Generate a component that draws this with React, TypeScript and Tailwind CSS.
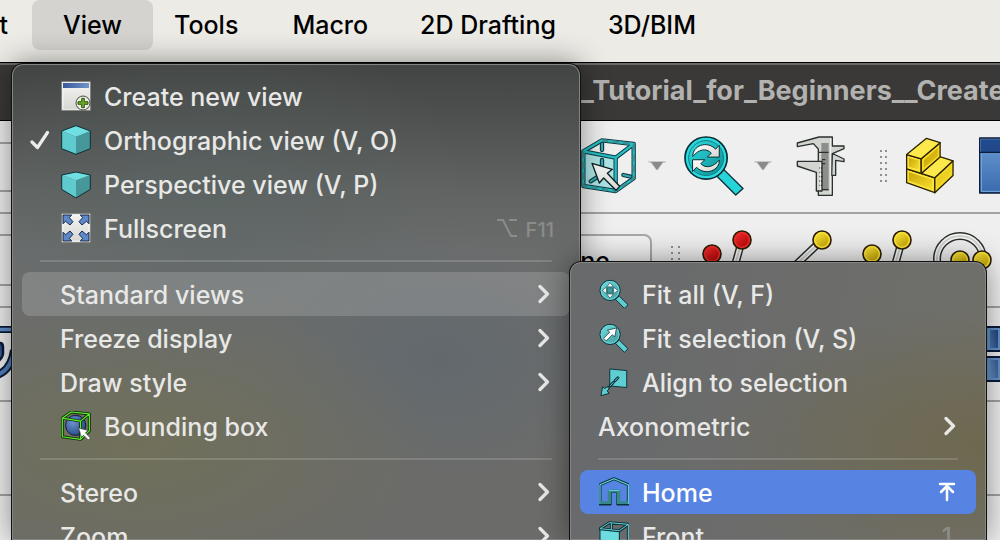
import type { ReactNode } from "react";

const INK = "#0d3138";

function Svg({ box, w, h, label, children }: { box: string; w: number; h: number; label?: string; children: ReactNode }) {
  return (
    <svg viewBox={box} width={w} height={h} className="block shrink-0" aria-hidden={label ? undefined : true} aria-label={label} strokeLinejoin="round">
      {children}
    </svg>
  );
}

function Gradients() {
  return (
    <svg width="0" height="0" className="absolute" aria-hidden>
      <defs>
        <linearGradient id="blueBar"><stop offset="0" stopColor="#38599c" /><stop offset="1" stopColor="#7095c9" /></linearGradient>
        <linearGradient id="blue" x1="0" y1="0" x2="0" y2="1"><stop offset="0" stopColor="#6c9cd3" /><stop offset="1" stopColor="#396aae" /></linearGradient>
        <linearGradient id="navy" x1="1" y1="0" x2="0" y2="1"><stop offset="0" stopColor="#1e4079" /><stop offset="1" stopColor="#6793c9" /></linearGradient>
        <linearGradient id="paper" x1="0" y1="0" x2="0" y2="1"><stop offset="0" stopColor="#f4f4f2" /><stop offset="1" stopColor="#d6d8d2" /></linearGradient>
        <linearGradient id="white" x1="0" y1="0" x2="1" y2="1"><stop offset="0" stopColor="#ffffff" /><stop offset="1" stopColor="#d5d7d0" /></linearGradient>
        <linearGradient id="aqua" x1="0" y1="0" x2="1" y2="1"><stop offset="0" stopColor="#2fe0e2" /><stop offset="1" stopColor="#0b8a91" /></linearGradient>
        <linearGradient id="aquaSoft" x1="0" y1="0" x2="1" y2="1"><stop offset="0" stopColor="#74dfe1" /><stop offset="1" stopColor="#3e999c" /></linearGradient>
        <linearGradient id="yellow" x1="0" y1="0" x2="1" y2="1"><stop offset="0" stopColor="#fbe63c" /><stop offset="1" stopColor="#c4a000" /></linearGradient>
        <linearGradient id="gold" x1="0" y1="0" x2="1" y2="1"><stop offset="0" stopColor="#c9a40a" /><stop offset="1" stopColor="#f7de2c" /></linearGradient>
        <linearGradient id="red" x1="0" y1="0" x2="1" y2="1"><stop offset="0" stopColor="#f02c2c" /><stop offset="1" stopColor="#b50404" /></linearGradient>
        <radialGradient id="ball" cx="0.35" cy="0.35" r="0.8"><stop offset="0" stopColor="#6f92cf" /><stop offset="1" stopColor="#1c3f80" /></radialGradient>
      </defs>
    </svg>
  );
}

/* ---------- menu icons ---------- */

function NewViewIcon() {
  return (
    <Svg box="183 243 90 90" w={30} h={30}>
      <rect x="185" y="245" width="86" height="86" fill="#fff" stroke="#85857e" strokeWidth="3" />
      <rect x="190" y="250" width="77" height="77" fill="url(#paper)" />
      <rect x="189" y="249" width="78" height="15" fill="url(#blueBar)" />
      <circle cx="249" cy="309" r="21" fill="#ecece8" stroke="#4b4b45" strokeWidth="3" />
      <path d="M245 295h8v10h11v8h-11v10h-8v-10h-11v-8h11z" fill="#6aa62b" stroke="#35610f" strokeWidth="3" />
    </Svg>
  );
}

function OrthographicIcon() {
  return (
    <Svg box="183 375 90 90" w={30} h={30}>
      <path d="M185 393L228 410V463L185 446Z" fill="#5fcbce" />
      <path d="M271 393L228 410V463L271 446Z" fill="#459799" />
      <path d="M228 377L271 393L228 410L185 393Z" fill="#70dfe2" />
      <path d="M228 377L271 393V446L228 463L185 446V393Z" fill="none" stroke={INK} strokeWidth="3" />
    </Svg>
  );
}

function PerspectiveIcon() {
  return (
    <Svg box="183 509 90 90" w={30} h={30}>
      <path d="M185 527L228 543V596L185 570Z" fill="#5fcbce" />
      <path d="M271 527L228 543V596L271 570Z" fill="#459799" />
      <path d="M228 518L271 527L228 543L185 527Z" fill="#70dfe2" />
      <path d="M228 518L271 527V570L228 596L185 570V527Z" fill="none" stroke={INK} strokeWidth="3" />
    </Svg>
  );
}

function FullscreenIcon() {
  const arrow = "M6 6H32L25 14L36 26L27 36L14 25L6 32Z";
  return (
    <Svg box="0 0 90 90" w={30} h={30}>
      <rect x="2" y="2" width="86" height="86" fill="#fff" stroke="#85857e" strokeWidth="3" />
      <rect x="7" y="7" width="76" height="76" fill="url(#paper)" />
      <g fill="#5f88c6" stroke="#16284e" strokeWidth="3">
        <path d={arrow} />
        <path d={arrow} transform="matrix(-1 0 0 1 90 0)" />
        <path d={arrow} transform="matrix(1 0 0 -1 0 90)" />
        <path d={arrow} transform="matrix(-1 0 0 -1 90 90)" />
      </g>
    </Svg>
  );
}

function BoundingBoxIcon() {
  const edges = "M187 475L243 484V540L187 532ZM187 475L214 456L270 462L243 484M270 462V514L243 540";
  return (
    <Svg box="183 453 92 92" w={30} h={30}>
      <circle cx="228" cy="497" r="31" fill="url(#ball)" stroke="#101c33" strokeWidth="3" />
      <path d={edges} fill="none" stroke="#12300c" strokeWidth="9" />
      <path d={edges} fill="none" stroke="#5cf02c" strokeWidth="3.5" />
      <path d="M237 505L266 513L258 520L273 536L267 542L252 527L246 534Z" fill="#fff" stroke="#3a3a3a" strokeWidth="2" />
    </Svg>
  );
}

function Lens({ children }: { children: ReactNode }) {
  return (
    <Svg box="56 55 92 92" w={30} h={30}>
      <path d="M118 107L145 134L134 145L107 118Z" fill="#5fcdd0" stroke={INK} strokeWidth="3" />
      <circle cx="90" cy="90" r="31" fill="url(#aquaSoft)" stroke={INK} strokeWidth="3" />
      <circle cx="90" cy="90" r="27" fill="none" stroke="#6bd9db" strokeWidth="3" />
      {children}
    </Svg>
  );
}

function FitAllIcon() {
  return (
    <Lens>
      <path d="M90 66L100 79H80ZM90 114L100 101H80ZM66 90L79 80V100ZM114 90L101 80V100Z" fill="#fff" stroke="#1d4a4d" strokeWidth="2" />
      <rect x="82" y="82" width="16" height="16" fill="#3f9a9e" stroke="#1d5d61" strokeWidth="2" />
    </Lens>
  );
}

function FitSelectionIcon() {
  return (
    <Lens>
      <path d="M110 70L104 98L97 91L78 110L70 102L89 83L82 77Z" fill="#fff" stroke="#1d4043" strokeWidth="2.5" />
    </Lens>
  );
}

function AlignIcon() {
  return (
    <Svg box="838 319 92 92" w={30} h={30}>
      <path d="M871 325L923 330V382L871 377Z" fill="#5fced2" stroke={INK} strokeWidth="3" />
      <path d="M896 352L861 388" stroke={INK} strokeWidth="9" strokeLinecap="round" strokeDasharray="13 8" />
      <path d="M896 352L861 388" stroke="#5fced2" strokeWidth="3" strokeLinecap="round" strokeDasharray="13 8" />
      <path d="M849 380L856 385L863 379L869 386L863 392L869 400L844 407Z" fill="#5fced2" stroke={INK} strokeWidth="3" />
    </Svg>
  );
}

function HomeIcon() {
  return (
    <Svg box="837 650 90 90" w={30} h={30}>
      <path d="M840 731V673L882 655L925 673V731H893V693H871V731Z" fill="none" stroke={INK} strokeWidth="9" />
      <path d="M840 731V673L882 655L925 673V731" fill="none" stroke="#63dbe0" strokeWidth="3.5" />
      <path d="M843 729V725H865V690H899V725H922V729H892V694H872V729Z" fill="#38878a" stroke="#38878a" strokeWidth="4" />
      <path d="M867 690H898" stroke="#63dbe0" strokeWidth="3" />
    </Svg>
  );
}

function FrontIcon() {
  const edges = "M840 805L868 787L925 792L898 811ZM925 792V844L898 871M874 789V806";
  return (
    <Svg box="837 782 90 90" w={30} h={30}>
      <path d="M840 805L898 811V871L840 862Z" fill="#6cdcdf" stroke={INK} strokeWidth="3" />
      <path d={edges} fill="none" stroke={INK} strokeWidth="9" />
      <path d={edges} fill="none" stroke="#63d4d8" strokeWidth="3" />
    </Svg>
  );
}

function Chevron() {
  return (
    <Svg box="0 0 12 20" w={12} h={20}>
      <path d="M2 2.5L9.500 10L2 17.5" fill="none" stroke="#e8e8e6" strokeWidth="3.200" strokeLinecap="round" />
    </Svg>
  );
}

function Check() {
  return (
    <Svg box="0 0 20 20" w={20} h={20}>
      <path d="M2 12L7.500 17.500L17.500 2.500" fill="none" stroke="#ececea" strokeWidth="3.200" strokeLinecap="round" />
    </Svg>
  );
}

function HomeKey() {
  return (
    <Svg box="0 0 18 20" w={18} h={20} label="Home key">
      <path d="M2 2H16M9 18V4M3 10L9 4L15 10" fill="none" stroke="#fff" strokeWidth="2.5" strokeLinecap="round" />
    </Svg>
  );
}

function OptionKey() {
  return (
    <Svg box="0 0 22 20" w={22} h={20} label="Option">
      <path d="M1 2H7L15 18H21M13 2H21" fill="none" stroke="#8b8b89" strokeWidth="2" />
    </Svg>
  );
}

/* ---------- toolbar icons ---------- */

function SelectBoxIcon() {
  const edges = "M40 124L137 143V243L40 228ZM40 124L96 91L191 102L137 143M191 102V205L137 243";
  return (
    <Svg box="33 84 165 168" w={55} h={56}>
      <path d="M40 124L137 143V243L40 228Z" fill="#aee4e6" />
      <path d="M96 94V120M96 150V196M84 200L62 214M160 195L182 200" stroke="#0d3c42" strokeWidth="13" strokeLinecap="round" />
      <path d="M96 94V120M96 150V196M84 200L62 214M160 195L182 200" stroke="#3aa9b0" strokeWidth="6" strokeLinecap="round" />
      <path d={edges} fill="none" stroke="#0d3c42" strokeWidth="13" />
      <path d={edges} fill="none" stroke="#25bfc6" strokeWidth="7" />
      <path d="M40 124V228L137 243L191 205V102L96 91" fill="none" stroke="#3b8f94" strokeWidth="7" strokeDasharray="20 12" />
      <path d="M66 160L127 178L112 190L149 229L138 241L101 204L88 219Z" fill="url(#white)" stroke="#0b1f22" strokeWidth="4" />
    </Svg>
  );
}

function RefreshLensIcon() {
  return (
    <Svg box="341 76 182 182" w={60} h={60}>
      <path d="M462 178L520 235L498 255L441 198Z" fill="#25d3d8" stroke="#062f36" strokeWidth="4" />
      <circle cx="408" cy="143" r="64" fill="#2bd8dc" stroke="#062f36" strokeWidth="5" />
      <circle cx="408" cy="143" r="53" fill="url(#aqua)" stroke="#0d7e86" strokeWidth="3" />
      <path d="M368 138C366 106 410 88 437 116L448 104V140H412L424 128C408 111 385 117 368 138Z" fill="url(#white)" stroke="#062f36" strokeWidth="3" />
      <path d="M448 149C450 180 406 198 379 171L367 184V148H404L392 160C407 176 431 170 448 149Z" fill="url(#white)" stroke="#062f36" strokeWidth="3" />
    </Svg>
  );
}

function CaliperIcon() {
  return (
    <Svg box="46 74 150 186" w={50} h={62}>
      <g stroke="#2a302f" strokeWidth="4" fill="#d2d5cf">
        <path d="M50 98L115 80H155V107L190 107V115L155 130V255H113V116L98 100L50 109Z" />
        <path d="M155 130L165 134L190 146V154L165 150V195H153Z" />
        <path d="M122 98H144V240H122Z" fill="#8c8e8a" stroke="none" />
        <path d="M50 153H124V242H107V186L50 167Z" />
      </g>
      <path d="M115 126H144M124 148H134M124 160H134M116 173H124M116 186H124M116 199H126M116 212H124M116 225H124M124 238H144" stroke="#2a302f" strokeWidth="4" />
      <path d="M150 84V250M119 159V238" stroke="#f2f3ef" strokeWidth="3" />
    </Svg>
  );
}

function BricksIcon() {
  return (
    <Svg box="376 82 149 172" w={50} h={57}>
      <g stroke="#2b2200" strokeWidth="4">
        <path d="M380 178L465 205V250L380 220Z" fill="#fbe33a" />
        <path d="M465 205L520 154V198L465 250Z" fill="#f5da22" />
        <path d="M424 192L480 141L520 154L465 205Z" fill="#fde94c" />
        <path d="M380 135L424 148V192L380 178Z" fill="#fbe33a" />
        <path d="M424 148L481 99V142L424 192Z" fill="#f5da22" />
        <path d="M380 135L440 86L481 99L424 148Z" fill="#fde94c" />
      </g>
      <path d="M387 188L457 211V239L387 214Z" fill="url(#gold)" />
      <path d="M387 145L416 153V180L387 172Z" fill="url(#gold)" />
      <path d="M432 152L474 115V139L432 175ZM473 209L513 172V195L473 232Z" fill="url(#gold)" />
    </Svg>
  );
}

function PanelIcon() {
  return (
    <Svg box="600 83 174 171" w={58} h={57}>
      <rect x="602" y="86" width="170" height="165" fill="url(#blue)" stroke="#0b1b38" strokeWidth="4" />
      <rect x="606" y="90" width="162" height="38" fill="#204a8b" />
      <path d="M602 129H772" stroke="#0b1b38" strokeWidth="4" />
      <path d="M607 133V246H770" fill="none" stroke="#7eaadb" strokeWidth="3" />
    </Svg>
  );
}

function Ball({ x, y, tone }: { x: number; y: number; tone: "red" | "yellow" }) {
  return (
    <>
      <circle cx={x} cy={y} r="9" fill={tone === "red" ? "#f02a2a" : "#fbe236"} stroke="#2a1c00" strokeWidth="1.600" />
      <circle cx={x} cy={y} r="6.500" fill={tone === "red" ? "url(#red)" : "url(#yellow)"} />
    </>
  );
}

function Rod({ d }: { d: string }) {
  return (
    <>
      <path d={d} fill="none" stroke="#2a302f" strokeWidth="8" />
      <path d={d} fill="none" stroke="#fafaf8" strokeWidth="5" />
      <path d={d} fill="none" stroke="#cfd2cc" strokeWidth="2" />
    </>
  );
}

function PolylineIcon({ tone }: { tone: "red" | "yellow" }) {
  return (
    <Svg box="0 0 50 60" w={50} h={60}>
      <Rod d="M40 10L30 46" />
      <Ball x={10} y={24} tone={tone} />
      <Ball x={40} y={10} tone={tone} />
    </Svg>
  );
}

function LineIcon() {
  return (
    <Svg box="0 0 60 60" w={60} h={60}>
      <Rod d="M50 10L8 50" />
      <Ball x={50} y={10} tone="yellow" />
      <Ball x={10} y={50} tone="yellow" />
    </Svg>
  );
}

function CircleIcon() {
  return (
    <Svg box="0 0 62 60" w={62} h={60}>
      <Rod d="M5 29A23 23 0 1 1 51 29A23 23 0 1 1 5 29" />
      <Ball x={28} y={30} tone="yellow" />
      <Ball x={50} y={30} tone="yellow" />
    </Svg>
  );
}

function DropArrow() {
  return (
    <Svg box="0 0 18 10" w={18} h={10}>
      <path d="M0 0H18L17 2H15L10 9H8L3 2H1Z" fill="#c9c9c9" />
      <path d="M3 1H15L9 9Z" fill="#8a8a8a" />
    </Svg>
  );
}

function Handle({ rows }: { rows: number }) {
  return (
    <span className="grid shrink-0 grid-cols-2 gap-x-[5px] gap-y-1" aria-hidden>
      {Array.from({ length: rows * 2 }, (_, i) => (
        <span key={i} className="size-[2px] bg-[#909090]" />
      ))}
    </span>
  );
}

/* ---------- menus ---------- */

type Item =
  | { kind: "line" }
  | { kind: "item"; label: string; icon?: ReactNode; checked?: boolean; sub?: boolean; keys?: ReactNode; state?: "open" | "active" };

const viewMenu: Item[] = [
  { kind: "item", label: "Create new view", icon: <NewViewIcon /> },
  { kind: "item", label: "Orthographic view (V, O)", icon: <OrthographicIcon />, checked: true },
  { kind: "item", label: "Perspective view (V, P)", icon: <PerspectiveIcon /> },
  { kind: "item", label: "Fullscreen", icon: <FullscreenIcon />, keys: <><OptionKey /><span className="pt-1 text-xl leading-6">F11</span></> },
  { kind: "line" },
  { kind: "item", label: "Standard views", sub: true, state: "open" },
  { kind: "item", label: "Freeze display", sub: true },
  { kind: "item", label: "Draw style", sub: true },
  { kind: "item", label: "Bounding box", icon: <BoundingBoxIcon /> },
  { kind: "line" },
  { kind: "item", label: "Stereo", sub: true },
  { kind: "item", label: "Zoom", sub: true },
];

const standardViews: Item[] = [
  { kind: "item", label: "Fit all (V, F)", icon: <FitAllIcon /> },
  { kind: "item", label: "Fit selection (V, S)", icon: <FitSelectionIcon /> },
  { kind: "item", label: "Align to selection", icon: <AlignIcon /> },
  { kind: "item", label: "Axonometric", sub: true },
  { kind: "line" },
  { kind: "item", label: "Home", icon: <HomeIcon />, keys: <HomeKey />, state: "active" },
  { kind: "item", label: "Front", icon: <FrontIcon />, keys: <span className="pt-[2px] pr-1">1</span> },
];

function Menu({ items, label, checks }: { items: Item[]; label: string; checks?: boolean }) {
  return (
    <div role="menu" aria-label={label} className="px-[10px] pt-[10px] text-[25px] leading-8 font-medium text-[#e8e8e6]">
      {items.map((item, i) =>
        item.kind === "line" ? (
          <hr key={i} className="mx-[18px] my-[10px] border-t-2 border-white/15" />
        ) : (
          <button
            key={i}
            type="button"
            role={item.checked ? "menuitemcheckbox" : "menuitem"}
            aria-checked={item.checked}
            className={`flex h-11 w-full items-center rounded-lg text-left ${checks && item.keys ? "pr-4" : "pr-5"} ${
              item.state === "active" ? "bg-[#5783e3] text-white" : item.state === "open" ? "bg-white/16" : ""
            }`}
          >
            {checks ? <span className="w-[38px] shrink-0 pl-2">{item.checked && <Check />}</span> : <span className="w-[18px] shrink-0" />}
            {item.icon && <span className="w-11 shrink-0 pl-px">{item.icon}</span>}
            <span className="grow pt-[2px] whitespace-nowrap">{item.label}</span>
            {item.keys && <span className={`flex items-center gap-2 ${item.state === "active" ? "" : "text-[#8b8b89]"}`}>{item.keys}</span>}
            {item.sub && <Chevron />}
          </button>
        ),
      )}
    </div>
  );
}

const panel = "absolute rounded-t-xl border border-b-0 border-[#111]";

export default function App() {
  return (
    <div className="relative flex h-screen flex-col overflow-hidden bg-[#efefef] font-['Inter','Liberation_Sans',sans-serif]">
      <Gradients />

      <nav className="flex h-[63px] shrink-0 items-start overflow-hidden border-b border-black bg-[#ecebe6] text-[25px] leading-[50px] font-medium text-black" aria-label="Application menu">
        <button type="button" className="flex w-[35px] justify-end pr-[27px]">Edit</button>
        <button type="button" className="-mx-[3px] rounded-lg bg-[#d4d3cf] px-[31px]">View</button>
        <button type="button" className="pr-7 pl-6">Tools</button>
        <button type="button" className="px-[26px]">Macro</button>
        <button type="button" className="px-[26px] whitespace-nowrap">2D Drafting</button>
        <button type="button" className="px-[26px]">3D/BIM</button>
      </nav>

      <header className="flex h-[58px] shrink-0 items-center border-t-2 border-b border-t-[#6a6a68] border-b-black bg-[#3a3937] pb-[3px] pl-[581px]">
        <h1 className="text-[27px] leading-8 font-bold whitespace-nowrap text-[#b2b2b0]">_Tutorial_for_Beginners__Create</h1>
      </header>

      <div className="flex min-h-0 grow">
        <aside className="w-14 shrink-0 *:border-b-2 *:border-[#a3a3a3]">
          <div className="h-[23px]" />
          <div className="h-12" />
          <div className="h-[22px]" />
          <div className="h-[22px]" />
          <div className="h-[50px]" />
          <div className="h-[22px]" />
          <div className="flex h-[94px] items-start overflow-hidden pt-[18px]">
            <Svg box="0 0 18 56" w={18} h={56}>
              <path d="M-10 3.500H18" stroke="#0b1b38" strokeWidth="7" />
              <path d="M-10 3.500H18" stroke="#6090c8" strokeWidth="3.500" />
              <path d="M-6 17H0Q3 17 3 21V28Q2 34 -6 38" fill="url(#navy)" stroke="#0b1b38" strokeWidth="2.500" />
              <path d="M14 24Q11 46 -6 50" fill="none" stroke="#0b1b38" strokeWidth="8" />
              <path d="M14 24Q11 46 -6 50" fill="none" stroke="#4f80bb" strokeWidth="4" />
            </Svg>
          </div>
          <div className="h-[94px]" />
        </aside>

        <main className="min-w-0 grow">
          <div className="flex h-[93px] items-center overflow-hidden border-b-2 border-[#a3a3a3] pb-[2px] pl-[525px]" role="toolbar" aria-label="View">
            <button type="button" aria-label="Box selection"><SelectBoxIcon /></button>
            <button type="button" aria-label="Box selection options" className="ml-3"><DropArrow /></button>
            <button type="button" aria-label="Refresh view" className="ml-[18px]"><RefreshLensIcon /></button>
            <button type="button" aria-label="Refresh options" className="ml-[10px]"><DropArrow /></button>
            <button type="button" aria-label="Measure" className="ml-6"><CaliperIcon /></button>
            <span className="ml-[34px]"><Handle rows={6} /></span>
            <button type="button" aria-label="Part" className="ml-5"><BricksIcon /></button>
            <button type="button" aria-label="Panel" className="ml-6 shrink-0"><PanelIcon /></button>
          </div>
          <div className="flex h-[94px] items-start overflow-hidden border-b-2 border-[#a3a3a3] pt-4 pl-[444px]" role="toolbar" aria-label="Draft">
            <button type="button" className="mt-1 h-14 w-[152px] shrink-0 rounded-lg border-2 border-[#a8a8a8] bg-[#f2f2f2] pr-10 text-right text-[25px] font-medium">None</button>
            <span className="mt-4 ml-[19px]"><Handle rows={6} /></span>
            <button type="button" aria-label="Polyline" className="ml-[22px]"><PolylineIcon tone="red" /></button>
            <button type="button" aria-label="Line" className="ml-5"><LineIcon /></button>
            <button type="button" aria-label="Wire" className="ml-[30px]"><PolylineIcon tone="yellow" /></button>
            <button type="button" aria-label="Circle" className="ml-5"><CircleIcon /></button>
          </div>
          <div className="flex h-[94px] items-start justify-end overflow-hidden border-b-2 border-[#a3a3a3] pt-[18px]">
            <Svg box="0 0 20 56" w={20} h={56}>
              <g stroke="#0b1b38" strokeWidth="2" fill="#6393ca">
                <rect x="1" y="1" width="30" height="24" />
                <rect x="1" y="31" width="30" height="24" />
              </g>
              <path d="M10 4H18V22H10ZM10 34H18V52H10Z" fill="url(#navy)" />
            </Svg>
          </div>
          <div className="h-[94px] border-b-2 border-[#a3a3a3]" />
        </main>
      </div>

      <div
        className={`${panel} top-[63px] bottom-0 left-[11px] w-[570px] overflow-hidden bg-[#6d6e6c] bg-[radial-gradient(ellipse_260px_170px_at_35%_27%,#5665637a,transparent),radial-gradient(ellipse_300px_150px_at_22%_80%,#70705a,transparent),radial-gradient(ellipse_180px_120px_at_75%_62%,#62696e,transparent),linear-gradient(180deg,#424443_0,#505251_60px,#626463_130px,#6b6d6d_190px,#6b6b69_100%)] shadow-[inset_0_0_0_1px_#858583,0_0_30px_#00000070]`}
      >
        <Menu items={viewMenu} label="View" checks />
      </div>

      <div
        className={`${panel} top-[261px] bottom-0 left-[569px] w-[418px] overflow-hidden bg-[#6c6c6a] bg-[radial-gradient(ellipse_280px_140px_at_100%_66%,#6e684e,transparent),linear-gradient(100deg,#696a6b_20%,#70706a_100%)] shadow-[inset_0_0_0_1px_#858583,0_0_30px_#00000070]`}
      >
        <Menu items={standardViews} label="Standard views" />
      </div>
    </div>
  );
}
